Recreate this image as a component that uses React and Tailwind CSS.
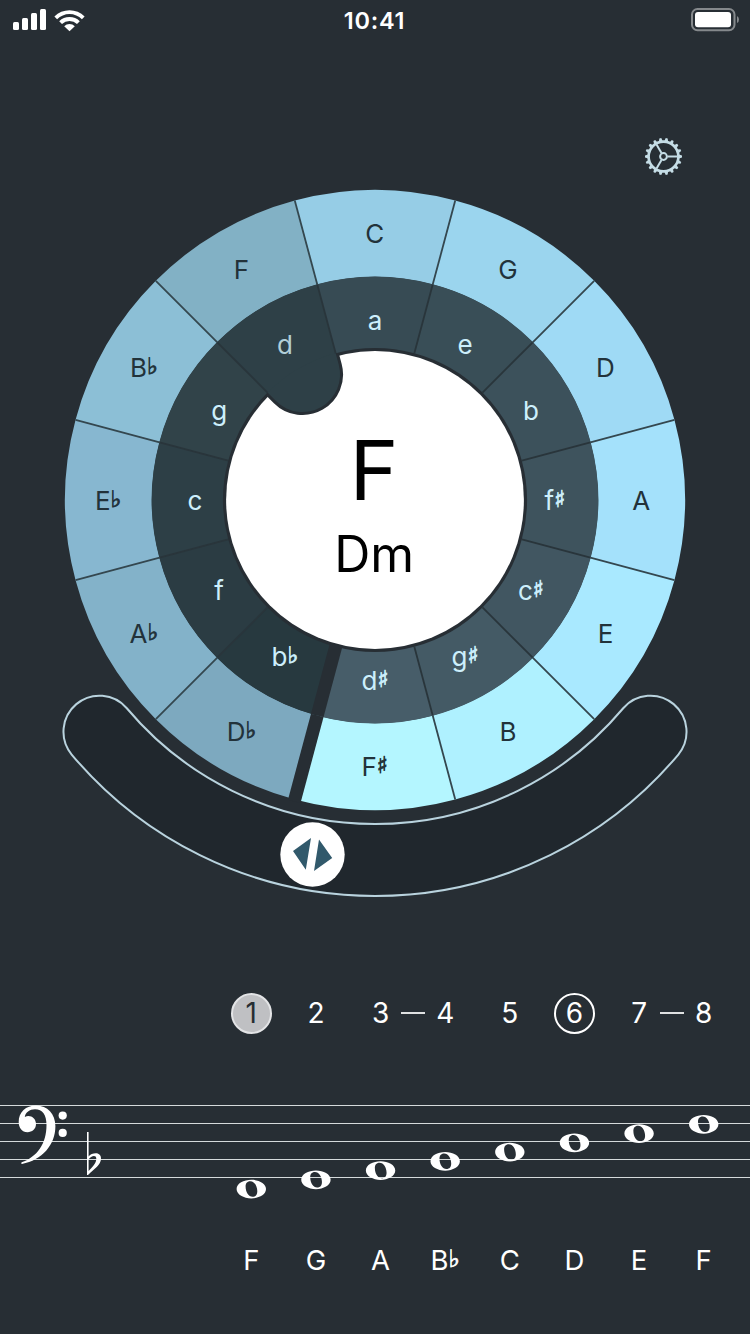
import React from "react";

const CX = 375;
const CY = 500;
const R_OUT = 310;
const R_MID = 223;
const R_IN = 152;

const MAJOR = [
  ["C", "#96cde6"], ["G", "#9bd5ee"], ["D", "#9fdaf5"], ["A", "#a4e1fb"],
  ["E", "#a9e9ff"], ["B", "#aff1ff"], ["F♯", "#b4f6ff"], ["D♭", "#7da9bf"],
  ["A♭", "#83b2c9"], ["E♭", "#87b7d0"], ["B♭", "#8cbfd6"], ["F", "#82b1c5"],
];

const MINOR = [
  ["a", "#374b54"], ["e", "#394e57"], ["b", "#3c515b"], ["f♯", "#3e535d"],
  ["c♯", "#415661"], ["g♯", "#445a65"], ["d♯", "#475d69"], ["b♭", "#27393f"],
  ["f", "#2b3c43"], ["c", "#2d3f46"], ["g", "#314349"], ["d", "#2e4047"],
];

const NOTES = ["F", "G", "A", "B♭", "C", "D", "E", "F"];

const polar = (deg, r, cx = CX, cy = CY) => {
  const a = (deg * Math.PI) / 180;
  return [cx + Math.sin(a) * r, cy - Math.cos(a) * r];
};

const pt = (deg, r) => polar(deg, r).map((n) => n.toFixed(2)).join(" ");

const sector = (mid, r1, r2) =>
  `M${pt(mid - 15, r1)} L${pt(mid - 15, r2)} A${r2} ${r2} 0 0 1 ${pt(mid + 15, r2)} L${pt(mid + 15, r1)} A${r1} ${r1} 0 0 0 ${pt(mid - 15, r1)}Z`;

const LOBE = `M${pt(-45, 170)} L${pt(-45, 140)} A37.5 37.5 0 0 0 ${pt(-15, 140)} L${pt(-15, 170)}Z`;

const TRACK = `M${pt(230, 324)} A324 324 0 0 0 ${pt(130, 324)} A36 36 0 0 1 ${pt(130, 396)} A396 396 0 0 1 ${pt(230, 396)} A36 36 0 0 1 ${pt(230, 324)}Z`;

function Accidental({ sign }) {
  return <span className="relative -top-[3px] font-['DejaVu_Sans'] text-[24px] leading-none font-bold [-webkit-text-stroke:0.7px_currentColor]">{sign}</span>;
}

function DialLabel({ x, y, text, fill }) {
  return (
    <text x={x} y={y} textAnchor="middle" fill={fill} className="font-['Inter'] text-[26px]">
      {text[0]}
      {text[1] && (
        <tspan dy="-3" stroke={fill} strokeWidth="0.8" className="font-['DejaVu_Sans'] text-[23px] font-bold">{text[1]}</tspan>
      )}
    </text>
  );
}

function StatusBar() {
  return (
    <header className="grid h-10 grid-cols-3 items-center px-[11px]">
      <svg width="76" height="40" viewBox="11 0 76 40" fill="#fff">
        <rect x="13" y="22" width="6" height="8" rx="1.5" />
        <rect x="22" y="18" width="6" height="12" rx="1.5" />
        <rect x="31" y="13" width="6" height="17" rx="1.5" />
        <rect x="40" y="9" width="6" height="21" rx="1.5" />
        <path d="M54.4 16.4 A21.5 21.5 0 0 1 84.6 16.4 L81.9 19.2 A17.6 17.6 0 0 0 57.1 19.2Z" />
        <path d="M59.2 21.3 A14.7 14.7 0 0 1 79.8 21.3 L77 24.1 A10.7 10.7 0 0 0 62 24.1Z" />
        <path d="M64.2 26.2 A7.6 7.6 0 0 1 74.8 26.2 L69.5 31.3Z" />
      </svg>
      <div className="pt-px pr-px text-center text-[23.5px] font-semibold tracking-[0.7px]">10:41</div>
      <svg className="justify-self-end" width="50" height="40" viewBox="689 0 50 40">
        <rect x="692" y="9" width="42.5" height="21.2" rx="5.5" fill="none" stroke="#85898c" strokeWidth="2" />
        <rect x="695" y="12" width="36" height="15.2" rx="3" fill="#fff" />
        <path d="M737 16v7q2-1 2-3.500t-2-3.500Z" fill="#85898c" />
      </svg>
    </header>
  );
}

function Gear() {
  return (
    <svg width="40" height="40" viewBox="-20.5 -20.5 40 40" fill="none" stroke="#c5dde6">
      <circle r="14.900" strokeWidth="2.600" />
      <circle r="3.400" strokeWidth="2" />
      {[0, 120, 240].map((a) => (
        <path key={a} d="M4 0H14" strokeWidth="2" transform={`rotate(${a})`} />
      ))}
      {Array.from({ length: 18 }, (_, i) => (
        <path key={i} d="M15.500 -1.900L18.500 -1V1L15.500 1.900Z" fill="#c5dde6" stroke="none" transform={`rotate(${i * 20})`} />
      ))}
    </svg>
  );
}

function Dial() {
  return (
    <svg className="block h-[725px] w-[750px]" viewBox="0 180 750 725">
      <circle cx={CX} cy={CY} r="148.900" fill="#fff" />
      <path d={LOBE} fill="#2e4047" stroke="#272e34" strokeWidth="6" />
      <path d={LOBE} fill="#2e4047" />
      {MAJOR.map(([name, color], i) => (
        <path key={name} d={sector(i * 30, R_MID, R_OUT)} fill={color} />
      ))}
      {MINOR.map(([name, color], i) => (
        <path key={name} d={sector(i * 30, R_IN, R_MID + 0.3)} fill={color} />
      ))}
      {MAJOR.map(([name], i) => {
        const gap = i === 6;
        const [x1, y1] = polar(i * 30 + 15, gap ? 149.5 : R_IN);
        const [x2, y2] = polar(i * 30 + 15, R_MID);
        const [x3, y3] = polar(i * 30 + 15, gap ? 312 : R_OUT);
        return (
          <g key={name} strokeWidth={gap ? 13 : 1.8}>
            <line x1={x1} y1={y1} x2={x2} y2={y2} stroke={gap ? "#272e34" : "#29353b"} />
            <line x1={x2} y1={y2} x2={x3} y2={y3} stroke={gap ? "#272e34" : "#34474f"} />
          </g>
        );
      })}
      {MAJOR.map(([name], i) => {
        const [x, y] = polar(i * 30, 266.5);
        return <DialLabel key={name} x={x - 0.3} y={y + 9.9} text={name} fill="#22323a" />;
      })}
      {MINOR.map(([name], i) => {
        const [x, y] = polar(i * 30, 180);
        return <DialLabel key={name} x={x} y={y + 9.9} text={name} fill={name === "d" ? "#b1cfd9" : "#cdeffc"} />;
      })}
      <text x="374" y="500" textAnchor="middle" className="font-['Inter'] text-[83px]">F</text>
      <text x="374" y="572" textAnchor="middle" className="font-['Inter'] text-[50px] tracking-[-0.3px]">Dm</text>
      <path d={TRACK} fill="#20272d" stroke="#b9d3de" strokeWidth="2" />
      <g transform="translate(312.500 854.500)">
        <circle r="32.200" fill="#fff" />
        <path d="M-19.500 -3.500L-1.500 -16.500L-6.700 15.200Z M6.500 -15L19.700 3.500L1.500 16.500Z" fill="#31596b" />
      </g>
    </svg>
  );
}

function Degrees() {
  return (
    <div className="ml-[219px] grid h-[42px] w-[517px] grid-cols-8 items-center text-[28px]">
      {[1, 2, 3, 4, 5, 6, 7, 8].map((n) => (
        <div key={n} className="relative flex justify-center">
          {n === 1 ? (
            <span className="flex size-[41px] items-center justify-center rounded-full border-2 border-[#e3e4e6] bg-[#bfc0c3] text-[#272e34]">1</span>
          ) : n === 6 ? (
            <span className="flex size-[41px] items-center justify-center rounded-full border-2 border-white">6</span>
          ) : (
            <span className="leading-[41px]">{n}</span>
          )}
          {(n === 3 || n === 7) && <span className="absolute top-[19px] left-[53px] h-0.5 w-6 bg-[#dfe1e2]" />}
        </div>
      ))}
    </div>
  );
}

function Staff() {
  return (
    <svg className="block h-[110px] w-[750px]" viewBox="0 1095 750 110">
      {[1105.5, 1123.5, 1141.5, 1159.5, 1177.5].map((y) => (
        <line key={y} x1="0" x2="750" y1={y} y2={y} stroke="#d5dadb" />
      ))}
      <g fill="#fff">
        <path d="M18.700 1122C18.500 1112 26 1105.500 36 1105.500C47.500 1105.500 55.400 1114 55.400 1126C55.400 1145 42 1160 22 1164Q20.300 1163.500 21.700 1162.200C37 1157 46.500 1144 46.500 1125C46.500 1115 42.500 1109.300 35 1109.300C29.500 1109.300 25.500 1112.500 24.800 1117C30 1114.300 36 1118 36 1124C36 1129 32 1132.200 27.500 1132.200C22 1132.200 18.700 1128 18.700 1122Z" />
        <circle cx="62.700" cy="1115.600" r="4.100" />
        <circle cx="62.700" cy="1132.900" r="4.100" />
        <path fillRule="evenodd" d="M87 1132H88.600V1156.500C92 1152.500 101 1151.500 101 1158.500C101 1165 94 1169 88 1175H87ZM88.600 1159.500V1171C92.500 1167 96.300 1163 96.300 1158.700C96.300 1154.500 91 1155.800 88.600 1159.500Z" />
      </g>
      {NOTES.map((_, i) => (
        <path
          key={i}
          transform={`translate(${251.3 + i * 64.63} ${1189.1 - i * 9.25})`}
          fill="#fff"
          fillRule="evenodd"
          d="M-14.700 0C-14.700 -5.700 -7.500 -9.300 0 -9.300S14.700 -5.700 14.700 0S7.500 9.300 0 9.300S-14.700 5.700 -14.700 0ZM-5.700 -2.500C-5.700 3 -2.700 7.700 1.200 7.700C4.600 7.700 6 5.500 6 2.200C6 -3 3 -7.800 -1 -7.800C-4.400 -7.800 -5.700 -5.500 -5.700 -2.500Z"
        />
      ))}
    </svg>
  );
}

export default function App() {
  return (
    <main className="h-[1334px] w-[750px] overflow-hidden bg-[#272e34] font-['Inter',sans-serif] text-white">
      <StatusBar />
      <div className="flex h-[140px] justify-end pt-[96px] pr-[67px]">
        <Gear />
      </div>
      <Dial />
      <div className="pt-[87px]">
        <Degrees />
      </div>
      <div className="pt-[61px]">
        <Staff />
      </div>
      <div className="mt-[35px] ml-[219px] grid w-[517px] grid-cols-8 text-center text-[27.5px] leading-10">
        {NOTES.map((n, i) => (
          <div key={i} className="h-10 whitespace-nowrap">
            {n[0]}
            {n[1] && <Accidental sign={n[1]} />}
          </div>
        ))}
      </div>
    </main>
  );
}
